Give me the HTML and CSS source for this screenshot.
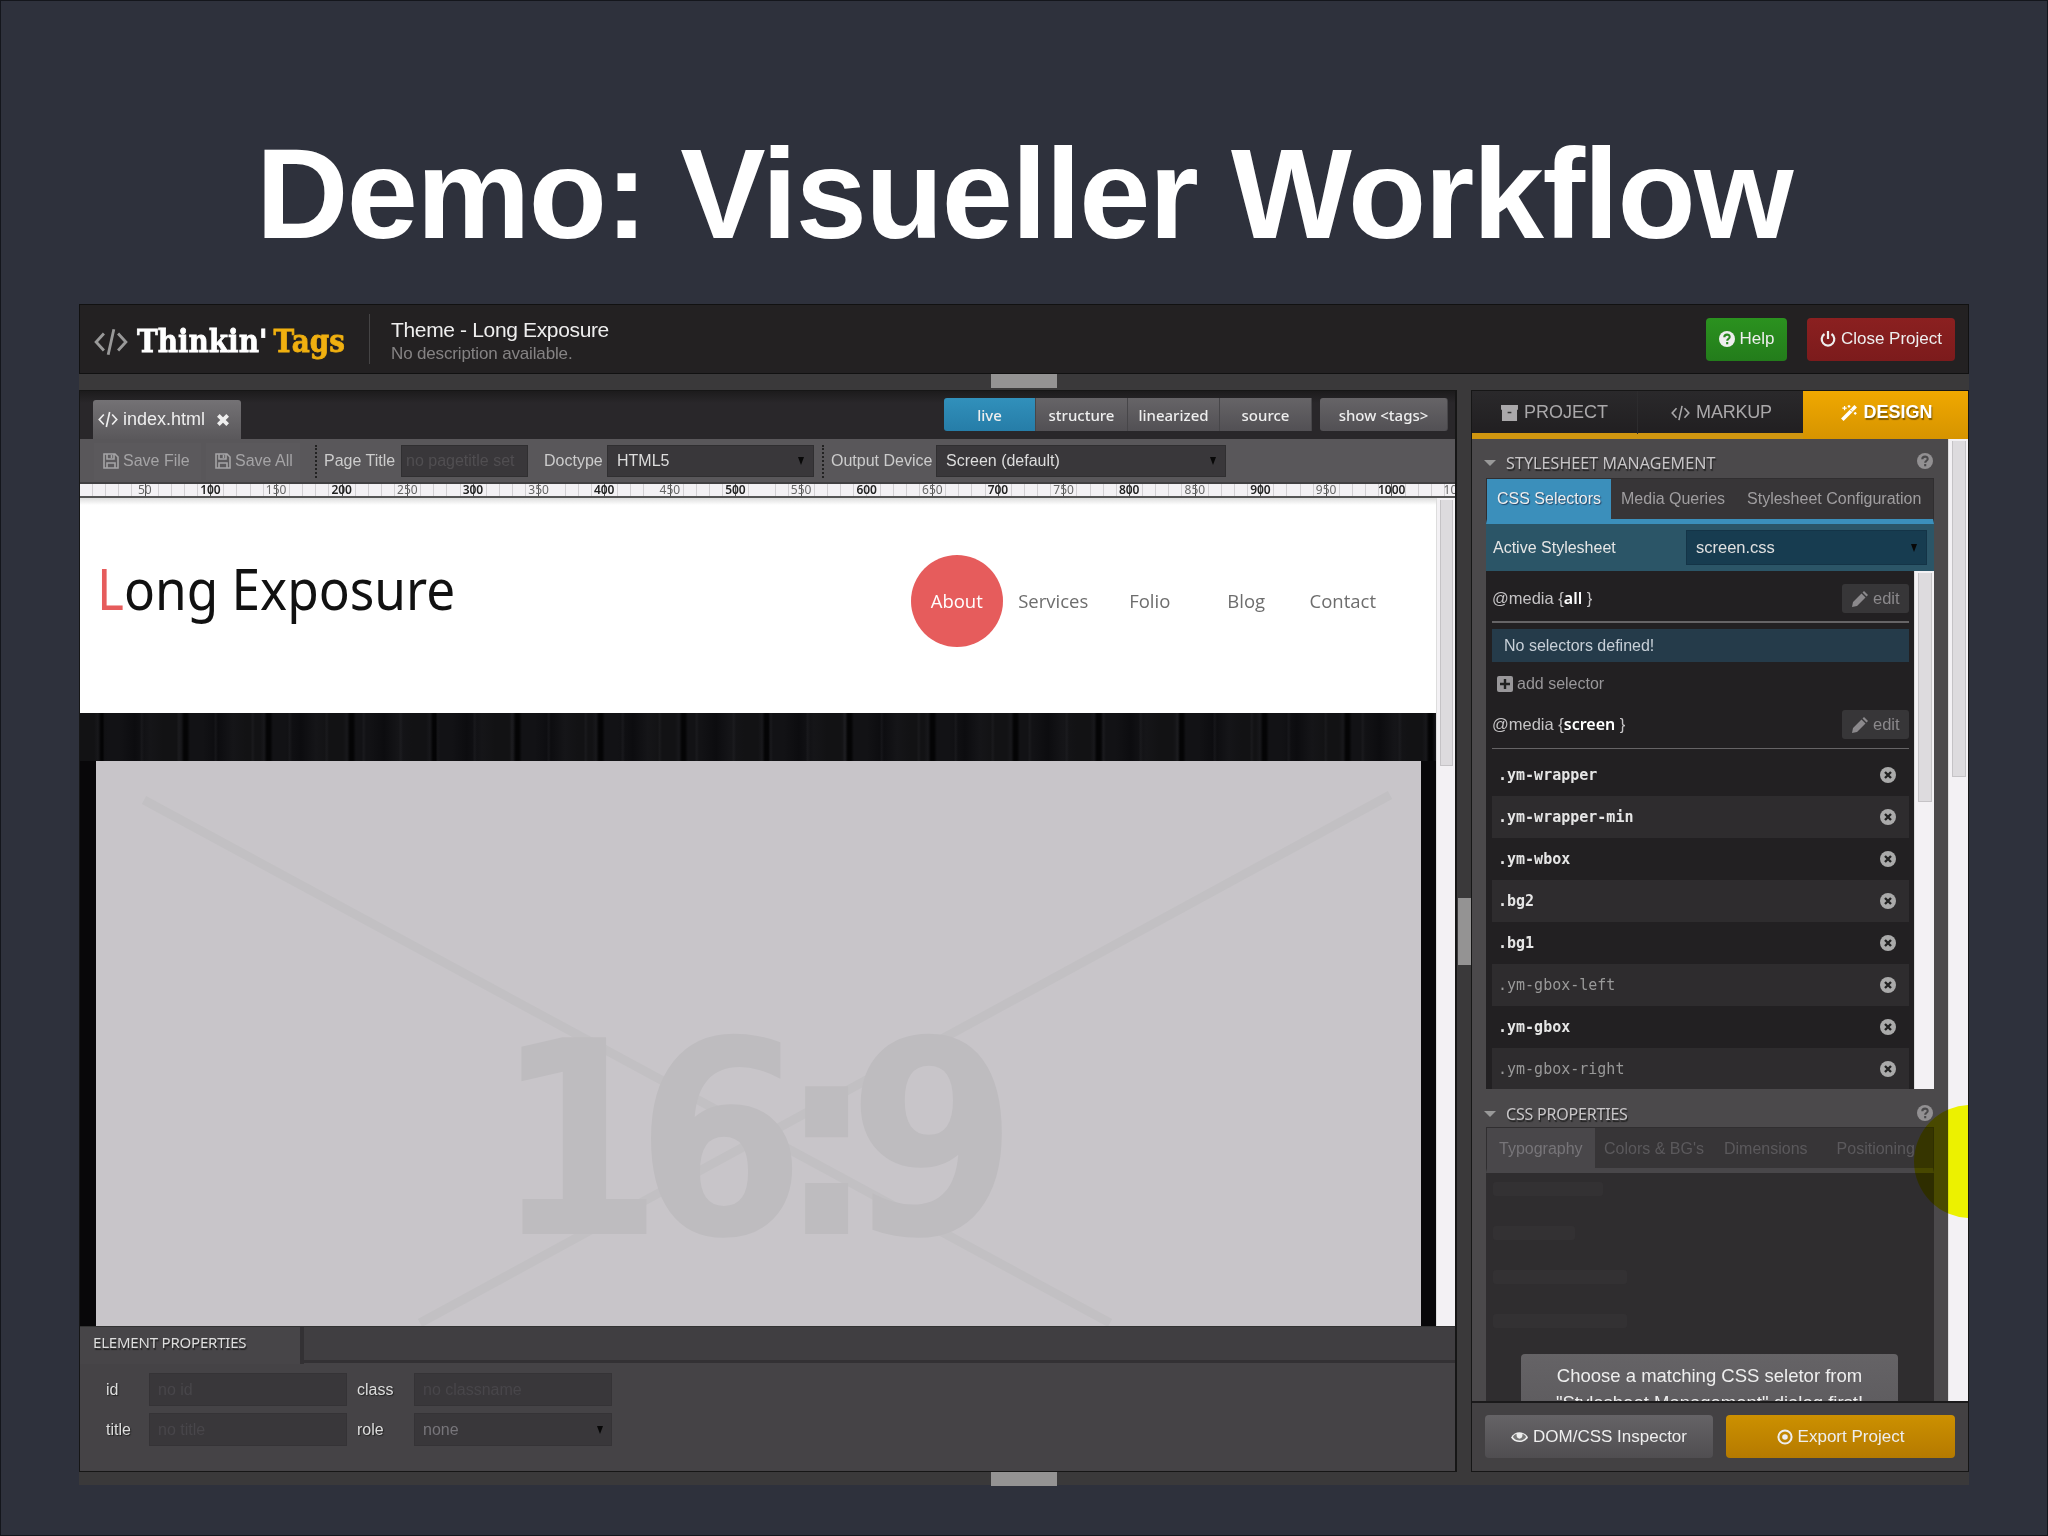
FILE: index.html
```html
<!DOCTYPE html>
<html lang="de">
  <head>
    <meta charset="UTF-8" />
    <title>Demo: Visueller Workflow</title>
    <link rel="stylesheet" href="styles.css">
  </head>
  <body>
    <svg class="sprite">
      <symbol id="code" viewBox="0 0 24 20"><path d="M7 4L1.500 10L7 16M17 4L22.500 10L17 16M14 1L10 19" fill="none" stroke="currentColor" stroke-width="2"/></symbol>
      <symbol id="save" viewBox="0 0 16 16"><path d="M1 1H12L15 4V15H1ZM4 1V6H11V1M8.500 2V5M4 15V10H12V15" fill="none" stroke="currentColor" stroke-width="1.600"/></symbol>
      <symbol id="close" viewBox="0 0 12 12"><path d="M2 2L10 10M10 2L2 10" stroke="currentColor" stroke-width="3.200"/></symbol>
      <symbol id="help" viewBox="0 0 16 16"><circle cx="8" cy="8" r="8" fill="currentColor"/><path d="M5.300 6.200C5.300 2.700 10.800 2.800 10.700 6C10.700 7.800 8.200 7.700 8.200 9.800M8.200 11V13.200" fill="none" stroke="var(--hole)" stroke-width="2.100"/></symbol>
      <symbol id="power" viewBox="0 0 16 16"><path d="M4.500 3A6.300 6.300 0 1 0 11.500 3M8 0V8" fill="none" stroke="currentColor" stroke-width="2.200"/></symbol>
      <symbol id="archive" viewBox="0 0 18 17"><path d="M0 0H18V5H17V17H1V5H0Z" fill="currentColor"/><path d="M7 8H11" stroke="#333" stroke-width="1.600"/></symbol>
      <symbol id="magic" viewBox="0 0 18 18"><path d="M1.500 16.500L13 5" stroke="currentColor" stroke-width="4"/><path d="M10.500 5.500L12.500 7.500" stroke="#c88f00" stroke-width="1"/><path d="M13 5L16.500 1.500" stroke="currentColor" stroke-width="4"/><path d="M4 1V6M1.500 3.500H6.500M9 0V3M7.500 1.500H10.500M16 8V11M14.500 9.500H17.500" stroke="currentColor" stroke-width="1.400"/></symbol>
      <symbol id="pencil" viewBox="0 0 16 16"><path d="M0 16L1 11L9.500 2.500L13.500 6.500L5 15ZM10.500 1.500L12 0L16 4L14.500 5.500Z" fill="currentColor"/></symbol>
      <symbol id="plus" viewBox="0 0 16 16"><rect width="16" height="16" rx="2" fill="currentColor"/><path d="M8 3V13M3 8H13" stroke="#222" stroke-width="2.400"/></symbol>
      <symbol id="remove" viewBox="0 0 16 16"><circle cx="8" cy="8" r="8" fill="currentColor"/><path d="M5 5L11 11M11 5L5 11" stroke="#222" stroke-width="2.400"/></symbol>
      <symbol id="eye" viewBox="0 0 18 14"><path d="M0 7.500C4 0 14 0 18 7.500C14 14 4 14 0 7.500Z" fill="currentColor"/><path d="M2 7C3 5 4.500 4 6 3.500C4.500 10.500 13.500 10.500 12 3.500C13.500 4 15 5 16 7C13 12 5 12 2 7Z" fill="#777"/></symbol>
      <symbol id="target" viewBox="0 0 16 16"><circle cx="8" cy="8" r="6.600" fill="none" stroke="currentColor" stroke-width="2"/><circle cx="8" cy="8" r="2.800" fill="currentColor"/></symbol>
    </svg>

    <main class="slide">
      <h1>Demo: Visueller Workflow</h1>

      <div class="app">
        <header class="app-header">
          <svg class="logo-icon"><use href="#code"/></svg>
          <div class="logo"><span>Thinkin' <b>Tags</b></span></div>
          <div class="theme">
            <div class="theme-name">Theme - Long Exposure</div>
            <div class="theme-desc">No description available.</div>
          </div>
          <div class="btn btn-help"><svg><use href="#help"/></svg>Help</div>
          <div class="btn btn-close"><svg><use href="#power"/></svg>Close Project</div>
        </header>

        <div class="splitter"><i></i></div>

        <div class="columns">
          <section class="editor">
            <div class="filebar">
              <div class="file-tab"><svg class="file-icon"><use href="#code"/></svg>index.html<svg class="file-close"><use href="#close"/></svg></div>
              <div class="views">
                <span class="active">live</span><span>structure</span><span>linearized</span><span>source</span>
              </div>
              <div class="show-tags">show &lt;tags&gt;</div>
            </div>

            <div class="toolbar">
              <div class="tool save-file"><svg><use href="#save"/></svg>Save File</div>
              <div class="tool save-all"><svg><use href="#save"/></svg>Save All</div>
              <div class="dots"></div>
              <label class="lbl-title">Page Title</label>
              <div class="field field-title">no pagetitle set</div>
              <label class="lbl-doctype">Doctype</label>
              <div class="field select field-doctype">HTML5</div>
              <div class="dots"></div>
              <label class="lbl-device">Output Device</label>
              <div class="field select field-device">Screen (default)</div>
            </div>

            <div class="ruler">
              <span>50</span><span>100</span><span>150</span><span>200</span><span>250</span><span>300</span><span>350</span><span>400</span><span>450</span><span>500</span><span>550</span><span>600</span><span>650</span><span>700</span><span>750</span><span>800</span><span>850</span><span>900</span><span>950</span><span>1000</span><span>1050</span>
            </div>

            <div class="preview">
              <div class="page">
                <div class="page-header">
                  <div class="page-logo"><i>L</i>ong Exposure</div>
                  <nav>
                    <a class="current">About</a><a>Services</a><a>Folio</a><a>Blog</a><a>Contact</a>
                  </nav>
                </div>
                <div class="stage">
                  <svg class="placeholder" viewBox="0 0 1325 565">
                    <path d="M48 39L1014 562M1294 34L324 562" stroke="#c2c0c3" stroke-width="9"/>
                    <text x="398" y="473">16:9</text>
                  </svg>
                </div>
              </div>
              <div class="scroll"><i></i></div>
            </div>

            <div class="props">
              <div class="props-head"><span>ELEMENT PROPERTIES</span></div>
              <div class="props-grid">
                <label>id</label><div class="field">no id</div>
                <label>class</label><div class="field">no classname</div>
                <label>title</label><div class="field">no title</div>
                <label>role</label><div class="field select">none</div>
              </div>
            </div>
          </section>

          <div class="splitter vertical"><i></i></div>

          <aside class="sidebar">
            <div class="main-tabs">
              <div><svg class="i-archive"><use href="#archive"/></svg>PROJECT</div>
              <div class="markup"><svg class="i-code"><use href="#code"/></svg>MARKUP</div>
              <div class="active"><svg class="i-magic"><use href="#magic"/></svg>DESIGN</div>
            </div>

            <div class="side-body">
              <div class="side-content">
                <h2>STYLESHEET MANAGEMENT<svg><use href="#help"/></svg></h2>
                <div class="sub-tabs">
                  <span class="active">CSS Selectors</span><span>Media Queries</span><span>Stylesheet Configuration</span>
                </div>
                <div class="active-sheet">Active Stylesheet<div class="field select">screen.css</div></div>
                <div class="selector-box">
                  <div class="selectors">
                    <div class="media"><span>@media {<b>all</b> }</span><div class="edit"><svg><use href="#pencil"/></svg>edit</div></div>
                    <div class="notice">No selectors defined!</div>
                    <div class="add"><svg><use href="#plus"/></svg>add selector</div>
                    <div class="media second"><span>@media {<b>screen</b> }</span><div class="edit"><svg><use href="#pencil"/></svg>edit</div></div>
                    <ul>
                      <li>.ym-wrapper<svg><use href="#remove"/></svg></li>
                      <li>.ym-wrapper-min<svg><use href="#remove"/></svg></li>
                      <li>.ym-wbox<svg><use href="#remove"/></svg></li>
                      <li>.bg2<svg><use href="#remove"/></svg></li>
                      <li>.bg1<svg><use href="#remove"/></svg></li>
                      <li class="dim">.ym-gbox-left<svg><use href="#remove"/></svg></li>
                      <li>.ym-gbox<svg><use href="#remove"/></svg></li>
                      <li class="dim">.ym-gbox-right<svg><use href="#remove"/></svg></li>
                    </ul>
                  </div>
                  <div class="scroll"><i></i></div>
                </div>

                <h2 class="css-props">CSS PROPERTIES<svg><use href="#help"/></svg></h2>
                <div class="sub-tabs disabled">
                  <span class="active">Typography</span><span>Colors &amp; BG's</span><span>Dimensions</span><span>Positioning</span>
                </div>
                <div class="css-body">
                  <i class="ghost g1"></i><i class="ghost g2"></i><i class="ghost g3"></i><i class="ghost g4"></i>
                  <div class="hint">Choose a matching CSS seletor from "Stylesheet Management" dialog first!</div>
                </div>
              </div>
              <div class="scroll"><i></i></div>
              <div class="pointer"></div>
            </div>

            <footer>
              <div class="btn btn-inspect"><svg class="i-eye"><use href="#eye"/></svg>DOM/CSS Inspector</div>
              <div class="btn btn-export"><svg><use href="#target"/></svg>Export Project</div>
            </footer>
          </aside>
        </div>

        <div class="splitter bottom"><i></i></div>
      </div>
    </main>
  </body>
</html>
```
FILE: styles.css
```css
* {
  box-sizing: border-box;
}

body {
  margin: 0;
  background: #2e313c;
  font-family: "Liberation Sans", Arial, sans-serif;
  font-size: 16px;
  color: #ccc;
}

svg {
  flex: none;
  width: 16px;
  height: 16px;
  --hole: #4a494b;
}

.sprite {
  display: none;
}

.slide {
  width: 2048px;
  height: 1536px;
  border: 1px solid #14161c;
  display: flex;
  flex-direction: column;
  align-items: center;
  overflow: hidden;
}

h1 {
  height: 303px;
  margin: 0;
  padding-top: 118px;
  font-size: 128px;
  line-height: 150px;
  letter-spacing: -1.6px;
  color: #fff;
  white-space: nowrap;
}

.app {
  width: 1890px;
  height: 1181px;
  background: #3a393a;
  display: flex;
  flex-direction: column;
  white-space: nowrap;
}

.app-header {
  height: 70px;
  background: #232122;
  border: 1px solid #111;
  display: flex;
  align-items: center;
  padding: 0 13px 0 14px;
}

.logo-icon {
  width: 34px;
  height: 30px;
  margin-top: 5px;
  color: #999;
}

.logo {
  width: 232px;
  margin: 3px 0 0 9px;
  font: bold 32px "DejaVu Serif", serif;
  color: #fff;
  -webkit-text-stroke: 0.8px;
}

.logo span {
  display: inline-block;
  transform: scaleX(0.87);
  transform-origin: left;
}

.logo b {
  color: #f0b010;
  margin-left: -4px;
}

.theme {
  border-left: 1px solid #454445;
  height: 50px;
  padding: 2px 0 0 21px;
  flex: 1;
}

.theme-name {
  font-size: 21px;
  line-height: 27px;
  letter-spacing: -0.35px;
  color: #eee;
}

.theme-desc {
  font-size: 17px;
  line-height: 21px;
  letter-spacing: -0.15px;
  color: #858384;
}

.btn {
  height: 43px;
  border-radius: 4px;
  display: flex;
  align-items: center;
  justify-content: center;
  gap: 5px;
  font-size: 17px;
  color: #eee;
}

.btn-help {
  width: 81px;
  margin-right: 20px;
  background: linear-gradient(#2b921f, #237c1b);
}

.btn-close {
  width: 148px;
  background: linear-gradient(#8b2020, #7c1b1c);
}

.btn-help svg {
  --hole: #2a8820;
}

.splitter {
  height: 16px;
  display: flex;
  justify-content: center;
}

.splitter i {
  width: 66px;
  height: 14px;
  background: #949393;
}

.splitter.vertical {
  width: 14px;
  height: auto;
  align-items: center;
}

.splitter.vertical i {
  width: 13px;
  height: 67px;
}

.splitter.bottom {
  height: 13px;
}

.columns {
  display: flex;
  height: 1082px;
}

.editor {
  width: 1378px;
  border: 1px solid #161616;
  border-right-width: 2px;
  display: flex;
  flex-direction: column;
}

.filebar {
  height: 48px;
  background: linear-gradient(#1c1b1c, #29272a 12px);
  display: flex;
  padding: 7px 7px 0 13px;
}

.file-tab {
  margin-top: 2px;
  width: 148px;
  height: 39px;
  padding: 0 5px;
  border-radius: 3px 3px 0 0;
  background: linear-gradient(#747275, #5a585b);
  display: flex;
  align-items: center;
  font-size: 18px;
  color: #eee;
  letter-spacing: 0;
}

.file-icon {
  width: 20px;
  height: 17px;
  margin-right: 5px;
}

.file-close {
  width: 14px;
  height: 14px;
  margin-left: 11px;
}

.views {
  display: flex;
  margin-left: auto;
}

.views span,
.show-tags {
  width: 92px;
  height: 33px;
  border-right: 1px solid #474649;
  background: linear-gradient(#666467, #525054);
  font: 500 15px/34px "Noto Sans", sans-serif;
  text-align: center;
  color: #eee;
}

.views .active {
  background: linear-gradient(#3190bb, #267da8);
  border-radius: 3px 0 0 3px;
}

.show-tags {
  width: 128px;
  margin-left: 8px;
  border-radius: 3px;
}

.toolbar {
  height: 45px;
  background: #59575a;
  border-bottom: 2px solid #414042;
  display: flex;
  align-items: center;
  padding-top: 1px;
  font-size: 16px;
}

.tool {
  width: 107px;
  height: 37px;
  padding-left: 9px;
  display: flex;
  align-items: center;
  gap: 4px;
  color: #a5a4a6;
  background: #5b595c;
}

.save-file {
  margin-left: 14px;
}

.save-all {
  margin-left: 5px;
  width: 94px;
}

.dots {
  height: 33px;
  border-left: 2px dotted #222;
  margin: 0 7px 0 15px;
}

.lbl-title {
  width: 77px;
}

.lbl-doctype {
  width: 63px;
  margin-left: 16px;
}

.lbl-device {
  width: 105px;
}

.field-device {
  width: 290px;
}

.field-doctype {
  width: 207px;
}

.field-doctype + .dots {
  margin-left: 8px;
}

.field {
  height: 32px;
  background: #39373a;
  border: 1px solid #302f31;
  display: flex;
  align-items: center;
  padding: 0 9px;
  color: #504e51;
}

.field-title {
  width: 127px;
  padding: 0 4px;
  font-size: 16px;
}

.select {
  justify-content: space-between;
  color: #ddd;
}

.select::after {
  content: "";
  border: 3.500px solid transparent;
  border-top: 8px solid #080808;
  border-bottom: 0;
}

.ruler {
  height: 14px;
  flex: none;
  overflow-x: clip;
  padding-left: 32px;
  display: flex;
  border-bottom: 2px solid #555;
  background:
    repeating-linear-gradient(90deg, transparent 0 64.625px, #555 64.625px 65.625px),
    repeating-linear-gradient(90deg, transparent 0 12.125px, #d2d0d3 12.125px 13.125px),
    #f3f1f4;
}

.ruler span {
  flex: none;
  width: 65.625px;
  text-align: center;
  font: 12px/11px "Noto Sans", sans-serif;
  color: #666;
}

.ruler span:nth-child(even) {
  font-weight: 600;
  color: #222;
}

.preview {
  height: 828px;
  flex: none;
  display: flex;
}

.page {
  width: 1356px;
  display: flex;
  flex-direction: column;
  background: linear-gradient(#ddd, #fff 7px);
}

.page-header {
  height: 215px;
  display: flex;
  align-items: flex-start;
  padding: 57px 45px 0 17px;
}

.page-logo {
  flex: 1;
  margin-top: -2px;
  font: 57px/70px "Noto Sans", sans-serif;
  color: #111;
  transform: scaleX(0.9);
  transform-origin: left;
}

.page-logo i {
  font-style: normal;
  color: #e65c5c;
}

nav {
  display: grid;
  grid-template-columns: repeat(5, 96.5px);
  font: 18.500px "Open Sans", sans-serif;
  color: #6d6d6d;
}

nav a {
  height: 92px;
  width: 92px;
  margin: 0 auto;
  padding-bottom: 2px;
  display: flex;
  align-items: center;
  justify-content: center;
}

nav .current {
  background: #e65c5c;
  border-radius: 50%;
  color: #fff;
  font-weight: 500;
}

.stage {
  flex: 1;
  padding: 48px 15px 0 16px;
  background:
    linear-gradient(transparent 48px, #080709 48px),
    repeating-linear-gradient(90deg, transparent 0 23px, rgba(40, 40, 44, 0.3) 24px 25px, transparent 27px 37px),
    repeating-linear-gradient(90deg, #121214 0 14px, #18181b 18px, #040405 21px 24px, #121215 27px 40px, #0c0c0f 55px, #151518 70px, #121214 83px);
}

.placeholder {
  display: block;
  width: 1325px;
  height: 565px;
  background: #c8c5c9;
}

.placeholder text {
  font: bold 270px "DejaVu Sans Condensed", "DejaVu Sans", sans-serif;
  font-stretch: condensed;
  letter-spacing: -27px;
  fill: #bebcbf;
}

.scroll {
  width: 20px;
  background: #f3f1f4;
  border-left: 1px solid #ddd;
  padding: 2px 2px 0 3px;
}

.scroll i {
  display: block;
  height: 266px;
  background: #dddbde;
  border: 1px solid #c5c3c6;
  border-top: 0;
}

.props {
  flex: 1;
  background: #454346;
}

.props-head {
  height: 37px;
  background: #403e41;
  border-top: 1px solid #333;
  border-bottom: 3px solid #333134;
}

.props-head span {
  display: block;
  width: 224px;
  height: 37px;
  background: #474548;
  border-right: 4px solid #333134;
  padding-left: 13px;
  font: 15px/31px "Noto Sans", sans-serif;
  letter-spacing: -0.2px;
  color: #ddd;
  text-shadow: 1px 2px 1px #222;
}

.props-grid {
  display: grid;
  grid-template-columns: 43px 208px 57px 198px;
  row-gap: 7px;
  padding: 10px 0 0 26px;
}

.props-grid label {
  line-height: 33px;
  color: #ddd;
  text-shadow: 1px 1px 1px #222;
}

.props-grid .field {
  width: 198px;
  height: 33px;
  border-color: #353336;
  color: #48464a;
  padding: 0 8px;
}

.props-grid .select {
  color: #77757a;
}

.sidebar {
  width: 498px;
  border: 1px solid #161616;
  display: flex;
  flex-direction: column;
  background: #434143;
}

.main-tabs {
  height: 48px;
  flex: none;
  display: grid;
  grid-template-columns: 165px 166px 165px;
  font-size: 18px;
  background: linear-gradient(#2a292b, #211f21);
  border-bottom: 6px solid #d09610;
}

.main-tabs div {
  display: flex;
  align-items: center;
  justify-content: center;
  gap: 6px;
  color: #aaa8aa;
  height: 43px;
}

.main-tabs .markup {
  padding-left: 2px;
  border-left: 1px solid #2d2c2e;
  letter-spacing: -0.2px;
}

.main-tabs .active {
  height: 48px;
  padding: 0 0 5px 3px;
  background: linear-gradient(#f0a800, #d69400);
  color: #fff;
  font-weight: bold;
  text-shadow: 1px 2px 1px #865f00;
}

.i-archive {
  width: 17px;
}

.main-tabs .i-code {
  width: 19px;
}

.side-body {
  height: 962px;
  display: flex;
  position: relative;
  overflow: hidden;
}

.side-content {
  width: 476px;
  background: #4b494b;
  padding: 4px 14px 0;
}

h2 {
  margin: 0;
  height: 35px;
  padding-top: 4px;
  font: 16px/34px "Noto Sans", sans-serif;
  letter-spacing: 0.1px;
  color: #c8c6c8;
  text-shadow: 1px 2px 1px #222;
  display: flex;
  align-items: center;
}

h2::before {
  content: "";
  border: 6px solid transparent;
  border-top: 6px solid #999;
  border-bottom: 0;
  margin: 0 10px 0 -2px;
}

h2 svg {
  margin: -3px 1px 0 auto;
  color: #929092;
}

h2.css-props {
  height: 38px;
  padding-top: 12px;
  letter-spacing: -0.2px;
  line-height: 26px;
}

.sub-tabs {
  height: 46px;
  display: flex;
  background: #373537;
  border: 1px solid #302e30;
  border-bottom: 5px solid #3b8fbb;
  color: #a09ea0;
  font-size: 16px;
  line-height: 40px;
}

.sub-tabs span {
  flex: none;
  padding: 0 11px;
}

.sub-tabs .active {
  width: 124px;
  height: 41px;
  padding: 0 10px;
  background: #3b8fbb;
  color: #eee;
  text-shadow: 1px 1px 1px #246;
  margin-right: -1px;
}

.sub-tabs.disabled {
  border-bottom-color: #49474a;
  color: #5b595c;
  height: 46px;
  line-height: 41px;
}

.sub-tabs.disabled span {
  padding: 0 9px 0 10px;
}

.sub-tabs.disabled span:nth-child(3) {
  padding: 0 11px;
}

.sub-tabs.disabled span:nth-child(4) {
  padding-left: 18px;
}

.sub-tabs.disabled .active {
  width: 108px;
  padding-left: 12px;
  background: #49474a;
  color: #777579;
  text-shadow: none;
}

.active-sheet {
  height: 47px;
  background: #2b5567;
  padding: 0 7px;
  display: flex;
  align-items: center;
  justify-content: space-between;
  color: #e5e5e5;
}

.active-sheet .field {
  width: 241px;
  height: 35px;
  background: #173c50;
  border-color: #143447;
  color: #e0e0e0;
  font-size: 16.500px;
}

.selector-box {
  height: 518px;
  display: flex;
}

.selectors {
  width: 428px;
  background: #222022;
  padding: 8px 5px 0 6px;
}

.selector-box .scroll i {
  height: 229px;
}

.side-body > .scroll i {
  height: 336px;
}

.media {
  height: 44px;
  border-bottom: 2px solid #666466;
  display: flex;
  justify-content: space-between;
  padding-top: 5px;
  line-height: 29px;
  font-size: 16.500px;
  color: #c5c3c5;
}

.media b {
  font: 600 16px "Noto Sans", sans-serif;
  color: #fff;
}

.edit {
  width: 67px;
  height: 29px;
  background: #373638;
  border-radius: 3px;
  display: flex;
  align-items: center;
  gap: 5px;
  padding-left: 10px;
  color: #8b898c;
}

.notice {
  height: 33px;
  margin-top: 6px;
  padding-left: 12px;
  line-height: 33px;
  background: #253b4a;
  color: #c8d0d8;
}

.add {
  height: 43px;
  padding-left: 5px;
  display: flex;
  align-items: center;
  gap: 4px;
  color: #99979a;
}

.second {
  border-bottom-width: 1px;
}

ul {
  margin: 5px 0 0;
  padding: 0;
  list-style: none;
}

li {
  height: 42px;
  padding: 0 13px 0 6px;
  display: flex;
  align-items: center;
  justify-content: space-between;
  font: bold 15px "DejaVu Sans Mono", monospace;
  color: #e5e5e5;
}

li:nth-child(even) {
  background: #2e2c2e;
}

li:last-child {
  height: 41px;
}

li.dim {
  font-weight: normal;
  color: #999;
}

li svg {
  color: #aaa;
}

.css-body {
  height: 230px;
  background: #2f2d2f;
  padding: 9px 35px 0 7px;
}

.ghost {
  display: block;
  width: 110px;
  height: 14px;
  margin-bottom: 30px;
  background: #333133;
  border-radius: 3px;
}

.g2 {
  width: 82px;
}

.g3,
.g4 {
  width: 134px;
}

.g4 {
  margin-bottom: 26px;
}

.hint {
  width: 377px;
  height: 70px;
  margin-left: 28px;
  padding: 8px 20px 0;
  border-radius: 4px;
  background: linear-gradient(#656366, #5c5a5d);
  font-size: 18.500px;
  line-height: 27px;
  text-align: center;
  white-space: normal;
  color: #eee;
}

.pointer {
  position: absolute;
  left: 442px;
  top: 666px;
  width: 113px;
  height: 113px;
  border-radius: 50%;
  background: #f8ff00;
  mix-blend-mode: multiply;
}

footer {
  flex: 1;
  border-top: 2px solid #1b1a1b;
  padding: 12px 13px 0 13px;
  display: flex;
  justify-content: space-between;
}

.btn-inspect {
  width: 228px;
  background: linear-gradient(#656366, #504e51);
}

.btn-inspect .i-eye {
  width: 17px;
}

.btn-export {
  width: 229px;
  background: linear-gradient(#cc9000, #b57a00);
}
```
